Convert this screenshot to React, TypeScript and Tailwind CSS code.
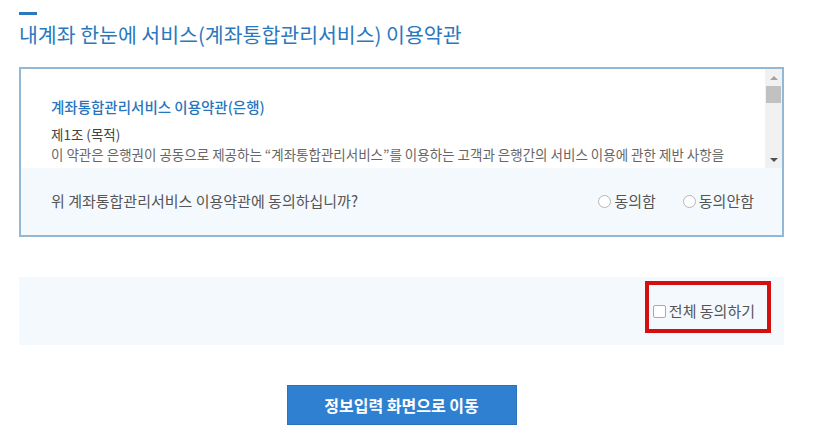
import React from 'react';

const font = { fontFamily: '"Noto Sans CJK KR", "Noto Sans", sans-serif' };

const Radio: React.FC<{ label: string }> = ({ label }) => (
  <label className="flex items-center gap-[3px] text-[15px] text-[#555]">
    <span className="w-[13px] h-[13px] rounded-full border border-[#b5b5b5] bg-white" />
    <span>{label}</span>
  </label>
);

const App: React.FC = () => {
  return (
    <div className="w-[813px] h-[435px] bg-white overflow-hidden" style={font}>
      <div className="ml-[19px] w-[765px] pt-[12px]">
        <div className="w-[18px] h-[3px] bg-[#2a78be]" />
        <h2 className="mt-[5px] text-[20.5px] leading-[28px] text-[#2a78be]">
          내계좌 한눈에 서비스(계좌통합관리서비스) 이용약관
        </h2>

        <div className="mt-[19px] border-2 border-[#93b8d6]">
          <div className="flex h-[99px] bg-white">
            <div className="flex-1 overflow-hidden pt-[27px] pl-[30px]">
              <h3 className="text-[14.5px] leading-[22px] font-medium text-[#2776bd]">계좌통합관리서비스 이용약관(은행)</h3>
              <p className="mt-[6px] text-[13.5px] leading-[20px] text-[#444]">제1조 (목적)</p>
              <p className="text-[13.5px] leading-[21px] text-[#666]">
                이 약관은 은행권이 공동으로 제공하는 “계좌통합관리서비스”를 이용하는 고객과 은행간의 서비스 이용에 관한 제반 사항을
                <br />
                규정함을 목적으로 합니다.
              </p>
            </div>
            <div className="w-[17px] flex flex-col items-center bg-[#f1f1f1]">
              <div className="h-[17px] flex items-center justify-center">
                <span className="w-0 h-0 border-l-[4px] border-r-[4px] border-b-[4px] border-l-transparent border-r-transparent border-b-[#a3a3a3]" />
              </div>
              <div className="w-[15px] h-[17px] bg-[#c1c1c1]" />
              <div className="flex-1" />
              <div className="h-[17px] flex items-center justify-center">
                <span className="w-0 h-0 border-l-[4px] border-r-[4px] border-t-[4px] border-l-transparent border-r-transparent border-t-[#505050]" />
              </div>
            </div>
          </div>
          <div className="h-[67px] bg-[#f4f9fe] flex items-center pl-[30px] pr-[28px]">
            <p className="flex-1 text-[15px] text-[#555]">위 계좌통합관리서비스 이용약관에 동의하십니까?</p>
            <div className="flex items-center gap-[27px]">
              <Radio label="동의함" />
              <Radio label="동의안함" />
            </div>
          </div>
        </div>

        <div className="mt-[40px] h-[68px] bg-[#f4f9fe] flex justify-end items-start pt-[4px] pr-[13px]">
          <div className="border-4 border-[#d30f0f] pl-[4px] pr-[12px] pt-[16px] pb-[8px] flex items-center gap-[3px]">
            <span className="w-[13px] h-[13px] rounded-[2px] border border-[#a9a9a9] bg-white" />
            <span className="text-[15px] leading-[20px] text-[#555]">전체 동의하기</span>
          </div>
        </div>

        <div className="mt-[40px] flex justify-center">
          <button className="w-[230px] h-[40px] bg-[#2f80d0] border border-[#2a73bb] text-white text-[16px] font-bold">
            정보입력 화면으로 이동
          </button>
        </div>
      </div>
    </div>
  );
};

export default App;
